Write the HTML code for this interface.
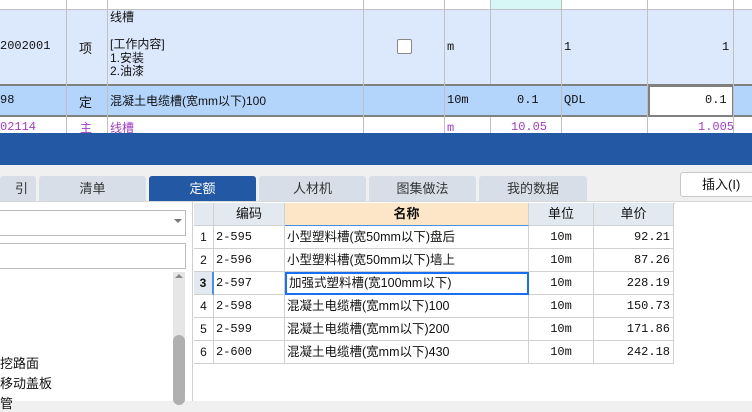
<!DOCTYPE html><html><head><meta charset="utf-8"><style>
*{margin:0;padding:0;box-sizing:border-box}
body{width:752px;height:401px;overflow:hidden;position:relative;background:#f0f0f0;font-family:"Liberation Sans","Noto Sans CJK SC",sans-serif;font-size:12px;color:#111}
.a{position:absolute}
.mono{font-family:"Liberation Mono","Noto Sans CJK SC",monospace}
.vl{position:absolute;width:1px;background:#c0c0c0}
.tab{position:absolute;top:176px;height:25px;background:#d8dee8;border-radius:3px 3px 0 0;text-align:center;line-height:25px;font-size:13px;color:#333}
.cell{position:absolute;border-right:1px solid #d0d0d0;border-bottom:1px solid #d0d0d0;height:23px;line-height:22px;font-size:12px}
</style></head><body>
<div class="a" style="left:0;top:0;width:752px;height:133px;background:#fff"></div>
<div class="a" style="left:491px;top:0;width:70px;height:9px;background:#d7f6f6"></div>
<div class="a" style="left:0;top:9px;width:752px;height:75px;background:#dce8fb;border-top:1px solid #c0c0c0"></div>
<div class="a" style="left:0;top:84px;width:752px;height:33px;background:#b3d4fb;border-top:2px solid #808080;border-bottom:2px solid #808080"></div>
<div class="a" style="left:648px;top:85px;width:86px;height:32px;background:#fff;border:2px solid #808080"></div>
<div class="vl" style="left:66px;top:0;height:133px"></div>
<div class="vl" style="left:107px;top:0;height:133px"></div>
<div class="vl" style="left:363px;top:0;height:133px"></div>
<div class="vl" style="left:444px;top:0;height:133px"></div>
<div class="vl" style="left:490px;top:0;height:84px"></div><div class="vl" style="left:490px;top:117px;height:16px"></div>
<div class="vl" style="left:561px;top:0;height:133px"></div>
<div class="vl" style="left:733px;top:0;height:133px"></div>
<div class="vl" style="left:647px;top:0;height:133px"></div>
<div class="a mono" style="left:0;top:39px;font-size:12px">2002001</div>
<div class="a" style="left:79px;top:38px;font-size:13px">项</div>
<div class="a" style="left:110px;top:11px;font-size:12px;line-height:13.5px">线槽<br><br>[工作内容]<br>1.安装<br>2.油漆</div>
<div class="a" style="width:15px;height:15px;background:#fff;border:1px solid #888;border-radius:2px;left:397px;top:39px"></div>
<div class="a mono" style="left:447px;top:40px">m</div>
<div class="a mono" style="left:564px;top:40px">1</div>
<div class="a mono" style="left:722px;top:40px">1</div>
<div class="a mono" style="left:0;top:93px">98</div>
<div class="a" style="left:79px;top:92px;font-size:13px">定</div>
<div class="a" style="left:110px;top:92px;font-size:12px">混凝土电缆槽(宽mm以下)100</div>
<div class="a mono" style="left:447px;top:93px">10m</div>
<div class="a mono" style="left:517px;top:93px">0.1</div>
<div class="a mono" style="left:564px;top:93px">QDL</div>
<div class="a mono" style="left:705px;top:93px">0.1</div>
<div class="a" style="left:0;top:119px;width:752px;height:14px;overflow:hidden;color:#a040c0">
<span class="a mono" style="left:0;top:1px">02114</span><span class="a" style="left:80px;top:0">主</span><span class="a" style="left:110px;top:0">线槽</span><span class="a mono" style="left:447px;top:2px">m</span><span class="a mono" style="left:511px;top:1px">10.05</span><span class="a mono" style="left:698px;top:1px">1.005</span></div>
<div class="a" style="left:0;top:133px;width:752px;height:32px;background:#2359a4"></div>
<div class="tab" style="left:0;width:36px;text-align:right;padding-right:8px">引</div>
<div class="tab" style="left:39px;width:107px">清单</div>
<div class="tab" style="left:149px;width:107px;background:#2359a4;color:#fff">定额</div>
<div class="tab" style="left:259px;width:107px">人材机</div>
<div class="tab" style="left:369px;width:107px">图集做法</div>
<div class="tab" style="left:479px;width:108px">我的数据</div>
<div class="a" style="left:680px;top:172px;width:76px;height:25px;background:#fff;border:1px solid #c8c8c8;border-radius:3px;line-height:23px;padding-left:21px;font-size:13px">插入(I)</div>
<div class="a" style="left:0;top:201px;width:752px;height:200px;background:#fff"></div>
<div class="a" style="left:0;top:201px;width:752px;height:1px;background:#d8d8d8"></div>
<div class="a" style="left:-2px;top:210px;width:188px;height:26px;border:1px solid #bbb"></div>
<div class="a" style="left:174px;top:219px;width:0;height:0;border-left:4px solid transparent;border-right:4px solid transparent;border-top:4px solid #777"></div>
<div class="a" style="left:-2px;top:243px;width:188px;height:26px;border:1px solid #bbb"></div>
<div class="a" style="left:173px;top:272px;width:12px;height:130px;background:#e6e6e6"></div>
<div class="a" style="left:175px;top:274px;width:0;height:0;border-left:4px solid transparent;border-right:4px solid transparent;border-bottom:4px solid #888"></div>
<div class="a" style="left:173px;top:335px;width:12px;height:70px;background:#b0b0b0;border-radius:6px"></div>
<div class="a" style="left:0;top:353px;font-size:13px">挖路面</div>
<div class="a" style="left:0;top:373px;font-size:13px">移动盖板</div>
<div class="a" style="left:0;top:393px;font-size:13px">管</div>
<div class="a" style="left:192px;top:201px;width:1px;height:200px;background:#d0d0d0"></div>
<div class="a" style="left:194px;top:203px;width:481px;height:1px;background:#d0d0d0"></div>
<div class="cell" style="left:194px;top:203px;width:20px;background:#e3e9f1"></div>
<div class="cell" style="left:214px;top:203px;width:71px;background:#e3e9f1;text-align:center;font-size:13px">编码</div>
<div class="cell" style="left:285px;top:203px;width:244px;background:#fde6c8;text-align:center;font-size:13px;font-weight:bold;border-bottom:1px solid #4a90e0">名称</div>
<div class="cell" style="left:529px;top:203px;width:65px;background:#e3e9f1;text-align:center;font-size:13px">单位</div>
<div class="cell" style="left:594px;top:203px;width:80px;background:#e3e9f1;text-align:center;font-size:13px">单价</div>
<div id="rows"></div>
<script>
var d=[["2-595","小型塑料槽(宽50mm以下)盘后","92.21"],["2-596","小型塑料槽(宽50mm以下)墙上","87.26"],["2-597","加强式塑料槽(宽100mm以下)","228.19"],["2-598","混凝土电缆槽(宽mm以下)100","150.73"],["2-599","混凝土电缆槽(宽mm以下)200","171.86"],["2-600","混凝土电缆槽(宽mm以下)430","242.18"]];
var h="";d.forEach(function(r,i){var t=226+i*23;
h+='<div class="cell" style="left:194px;top:'+t+'px;width:20px;text-align:center;'+(i==2?'background:#e3e9f1;font-weight:bold;border-right:2px solid #4a90e0':'')+'">'+(i+1)+'</div>';
h+='<div class="cell mono" style="left:214px;top:'+t+'px;width:71px;padding-left:2px">'+r[0]+'</div>';
h+='<div class="cell" style="left:285px;top:'+t+'px;width:244px;padding-left:2px;font-size:12.5px;'+(i==2?'border:2px solid #1a6ef0;line-height:19px;':'')+'">'+r[1]+'</div>';
h+='<div class="cell mono" style="left:529px;top:'+t+'px;width:65px;text-align:center">10m</div>';
h+='<div class="cell mono" style="left:594px;top:'+t+'px;width:80px;text-align:right;padding-right:3px">'+r[2]+'</div>';});
document.getElementById("rows").innerHTML=h;
</script>
</body></html>
